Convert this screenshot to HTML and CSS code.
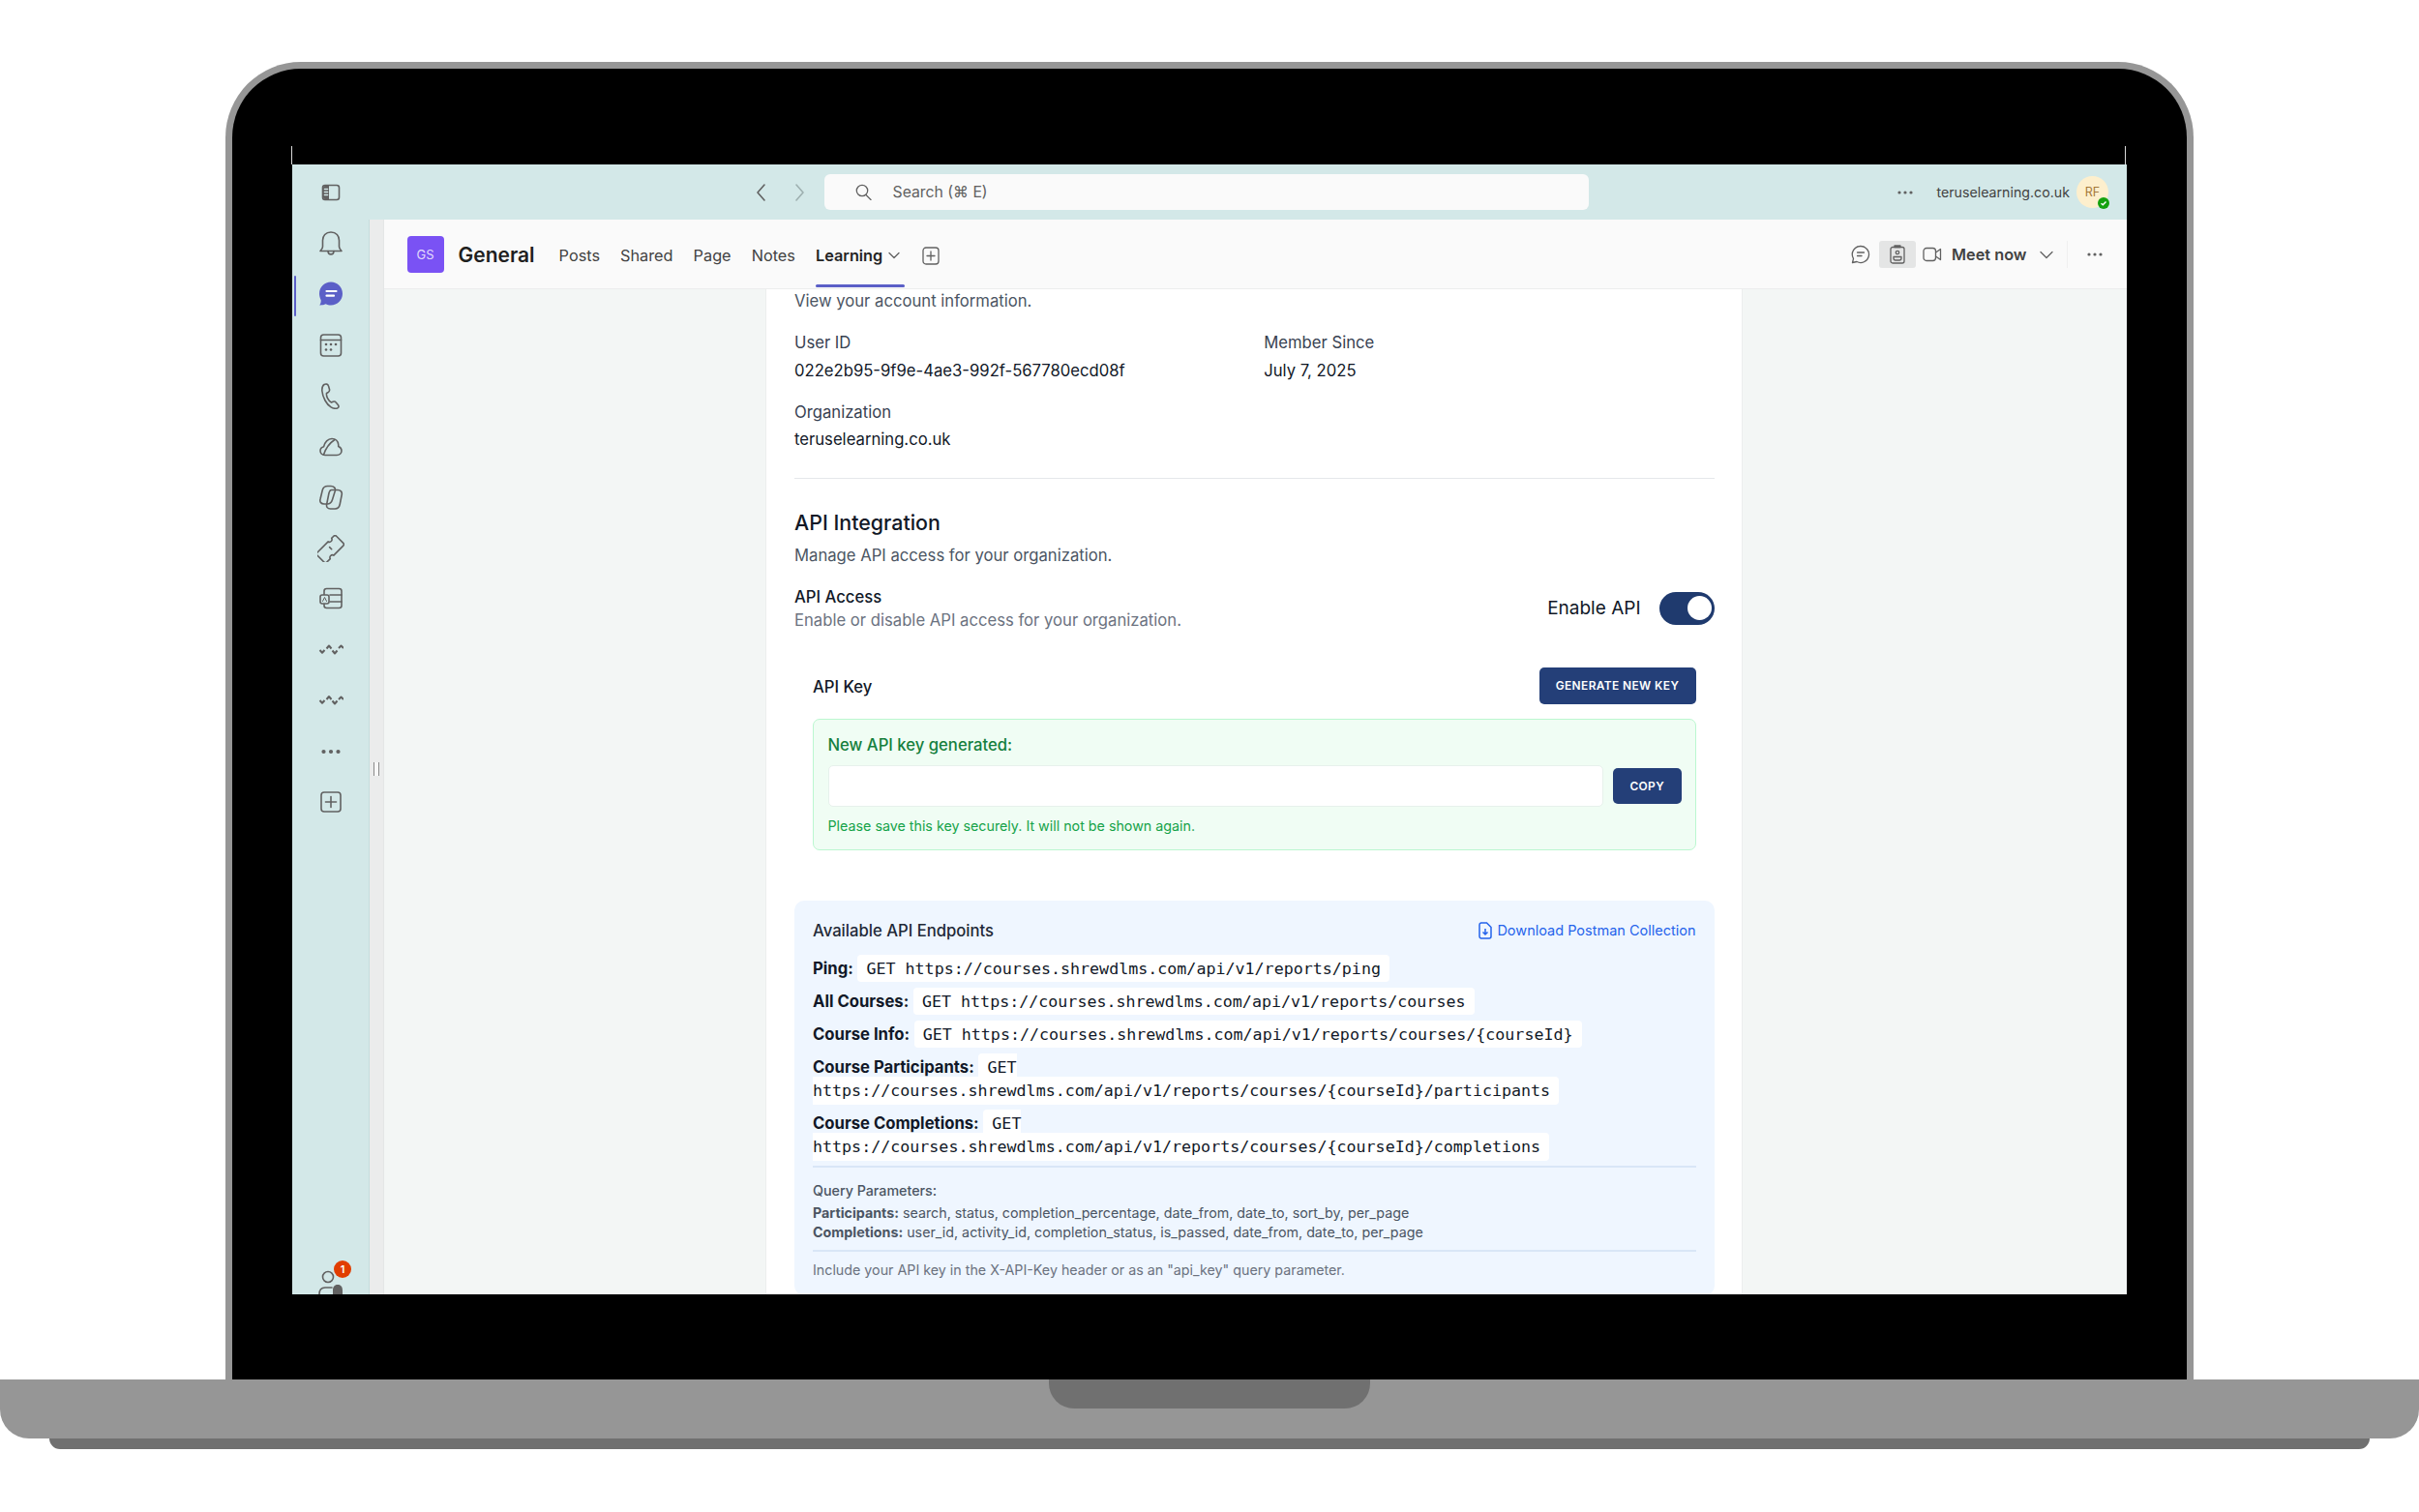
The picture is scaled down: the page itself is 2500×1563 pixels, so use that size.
FILE: index.html
```html
<!DOCTYPE html>
<html lang="en">
<head>
<meta charset="utf-8">
<title>General | Learning</title>
<link rel="stylesheet" href="styles.css">
</head>
<body>
<div class="device">
  <div class="lid">
    <div class="screen-top"></div>
    <div class="app">
      <div class="topbar">
        <div class="top-toggle">
          <svg class="ic" width="20" height="20" viewBox="0 0 20 20"><rect x="1.500" y="2.500" width="17" height="15" rx="2.500"/><path class="solid" d="M4 3h4v14H4a2 2 0 0 1-2-2V5a2 2 0 0 1 2-2z"/><path d="M3.500 6.500h3M3.500 9.500h3M3.500 12.500h3" stroke="#d3e8e8"/></svg>
        </div>
        <div class="top-nav">
          <svg class="ic" width="20" height="24" viewBox="0 0 20 24"><path d="M14 4l-7 8 7 8"/></svg>
          <svg class="ic faded" width="20" height="24" viewBox="0 0 20 24"><path d="M6 4l7 8-7 8"/></svg>
        </div>
        <div class="search">
          <svg class="ic thin" width="17" height="17" viewBox="0 0 17 17"><circle cx="7" cy="7" r="5.700"/><path d="M11 11.500l5 5"/></svg>
          <span>Search (⌘ E)</span>
        </div>
        <div class="top-right">
          <svg class="dots" width="16" height="4" viewBox="0 0 16 4"><circle cx="2" cy="2" r="1.600"/><circle cx="8" cy="2" r="1.600"/><circle cx="14" cy="2" r="1.600"/></svg>
          <span class="tenant">teruselearning.co.uk</span>
          <div class="avatar">RF<span class="status"><svg width="8" height="8" viewBox="0 0 8 8"><path d="M1.500 4.200l1.800 1.600 3.200-3.400" fill="none" stroke="#fff" stroke-width="1.400"/></svg></span></div>
        </div>
      </div>
      <div class="workspace">
        <nav class="rail">
          <a class="rail-item"><svg class="ic" width="26" height="28" viewBox="0 0 26 28"><path d="M13 2c-5.500 0-8.500 4-8.500 8.500v6.500c0 1.500-1 3-2.500 4.500h22c-1.500-1.500-2.500-3-2.500-4.500v-6.500C21.500 6 18.500 2 13 2z"/><path d="M10 21.500c0 4.500 6 4.500 6 0"/></svg></a>
          <a class="rail-item is-active"><svg width="26" height="28" viewBox="0 0 26 28"><path fill="#5b5fc7" d="M13 1.500c6.600 0 12 5.400 12 12s-5.400 12-12 12c-2 0-3.800-.500-5.400-1.300-1.700.8-3.700 1.300-6.300 1.200 1.100-1.500 1.500-3.300 1.400-5.200C1.800 18.400 1 16 1 13.500c0-6.600 5.400-12 12-12z"/><path d="M8.500 11h10M8.500 15.700h7.500" stroke="#fff" stroke-width="2.200" stroke-linecap="round" fill="none"/></svg></a>
          <a class="rail-item"><svg class="ic" width="26" height="26" viewBox="0 0 26 26"><rect x="2.500" y="2" width="21" height="22" rx="3"/><path d="M2.500 7.500h21"/><g class="solid"><circle cx="8" cy="12" r="1.300"/><circle cx="13" cy="12" r="1.300"/><circle cx="18" cy="12" r="1.300"/><circle cx="8" cy="17.500" r="1.300"/><circle cx="13" cy="17.500" r="1.300"/></g></svg></a>
          <a class="rail-item"><svg class="ic" width="26" height="28" viewBox="0 0 26 28"><path d="M6 2.500c2-1 4-.5 4.500 1.500l1 3.500c.3 1.200-.2 2.300-1.300 3l-1.700 1c-.5 3 1.500 7.500 5 9.500l1.700-.7c1.200-.5 2.300-.2 3 .7l2.300 2.700c1 1.500.5 2.800-1 3.300-4 1.200-9-1.500-12.500-8C3.500 12.500 2.500 5 6 2.500z"/></svg></a>
          <a class="rail-item"><svg class="ic" width="26" height="20" viewBox="0 0 26 20"><path d="M7 18.500c-3 0-5-1.900-5-4.500 0-2.200 1.500-3.800 3.600-4.300C6.500 5 10 1.500 14 1.500c3.600 0 6.300 2.500 6.700 6 .1.700.1 1.400 0 2 2 .7 3.300 2.400 3.300 4.500 0 2.700-2.200 4.500-5 4.500z"/><path d="M5.500 18c2-6 6-12 11.500-15.500"/></svg></a>
          <a class="rail-item"><svg class="ic" width="26" height="26" viewBox="0 0 26 26"><path d="M9.500 1.500h3.500c3 0 5 2 4.300 5l-2.800 9c-.8 2.800-2.800 4.500-5.500 4.500H6c-3 0-4.800-2-4-5l2.300-9.500C5 3 7 1.500 9.500 1.500z"/><path d="M13.500 5.500h6.500c3 0 4.800 2 4.200 5l-2 10c-.6 2.800-2.500 4.500-5 4.500h-4.700c-3 0-4.500-2-3.800-5l2-10c.5-2.800 1.200-4.500 2.800-4.500z"/></svg></a>
          <a class="rail-item"><svg class="ic" width="28" height="28" viewBox="-14 -14 28 28"><g transform="rotate(-45)"><path d="M-13-7H3a2.600 2.600 0 0 0 5 0H11a2 2 0 0 1 2 2V5a2 2 0 0 1-2 2H-3a2.600 2.600 0 0 0-5 0H-13a2 2 0 0 1-2-2V-5a2 2 0 0 1 2-2z"/><path d="M0-2v3"/></g></svg></a>
          <a class="rail-item"><svg class="ic" width="26" height="26" viewBox="0 0 26 26"><rect x="6" y="2.500" width="18" height="20" rx="2.500"/><path d="M12 9h12M12 16h12"/><rect class="solid-light" x="2" y="9" width="9" height="9" rx="2"/><path d="M4.500 15.500l2-4 2 4" stroke-width="1"/></svg></a>
          <a class="rail-item"><svg class="ic wave" width="26" height="14" viewBox="0 0 26 14"><path d="M1.500 7l2.500 2.700L6.500 7M8.500 5.500l2.500-3 2.500 3M14.500 7.500L17 10.500l2.500-3M21 5l2.500-2.500L26 5"/></svg></a>
          <a class="rail-item"><svg class="ic wave" width="26" height="14" viewBox="0 0 26 14"><path d="M1.500 7l2.500 2.700L6.500 7M8.500 6l2.500-3 2.500 3M14.500 7.500L17 10.500l2.500-3M21 6l2.500-2.500L26 6"/></svg></a>
          <a class="rail-item"><svg class="dots" width="20" height="6" viewBox="0 0 20 6"><circle cx="2.500" cy="3" r="2.100"/><circle cx="10" cy="3" r="2.100"/><circle cx="17.500" cy="3" r="2.100"/></svg></a>
          <a class="rail-item"><svg class="ic" width="24" height="24" viewBox="0 0 24 24"><rect x="2" y="2" width="20" height="20" rx="3"/><path d="M12 6.500v11M6.500 12h11"/></svg></a>
          <a class="rail-item rail-person"><svg class="ic" width="28" height="32" viewBox="0 0 28 32"><circle cx="11" cy="9" r="5.500"/><path d="M2 27c0-5 2-7 6-7h7"/><path class="solid" stroke="none" d="M21 17c3.500 0 5 2.500 5 6v4h3v2H13v-2h3v-4c0-3.500 1.500-6 5-6z"/></svg><span class="rail-badge">1</span></a>
        </nav>
        <div class="splitter"><span class="grip"></span></div>
        <div class="pane">
          <header class="channel">
            <div class="tile">GS</div>
            <h1 class="channel-name">General</h1>
            <div class="tabs">
              <a class="tab">Posts</a>
              <a class="tab">Shared</a>
              <a class="tab">Page</a>
              <a class="tab">Notes</a>
              <a class="tab is-current">Learning<svg class="ic thin" width="12" height="8" viewBox="0 0 12 8"><path d="M1 1.500L6 6.500l5-5"/></svg></a>
              <svg class="ic thin tab-add" width="18" height="19" viewBox="0 0 18 19"><rect x="1" y="1" width="16" height="17" rx="3"/><path d="M9 5v9M5 9.500h8"/></svg>
            </div>
            <div class="channel-tools">
              <svg class="ic thin" width="20" height="20" viewBox="0 0 20 20"><path d="M10 1.500a8.500 8.500 0 1 1-4 16L1.500 18.500l1-4.200A8.500 8.500 0 0 1 10 1.500z"/><path d="M6.500 8h7M6.500 11.500h4.500"/></svg>
              <span class="tool-on"><svg class="ic thin" width="16" height="20" viewBox="0 0 16 20"><rect x="1" y="2.500" width="14" height="16.500" rx="2"/><path d="M5 2.500V1h6v1.500z"/><circle cx="8" cy="8" r="1.700"/><path d="M4 12.500h8v1.500a2 2 0 0 1-2 2H6a2 2 0 0 1-2-2z"/></svg></span>
              <svg class="ic thin tool-video" width="20" height="16" viewBox="0 0 20 16"><rect x="1" y="1.500" width="12.500" height="13" rx="3"/><path d="M13.500 6l5-3.500v11l-5-3.500"/></svg>
              <span class="meet">Meet now</span>
              <svg class="ic thin tool-chev" width="14" height="9" viewBox="0 0 14 9"><path d="M1 1.500l6 6 6-6"/></svg>
              <span class="tool-sep"></span>
              <svg class="dots" width="16" height="4" viewBox="0 0 16 4"><circle cx="2" cy="2" r="1.600"/><circle cx="8" cy="2" r="1.600"/><circle cx="14" cy="2" r="1.600"/></svg>
            </div>
          </header>
          <main class="stage">
            <section class="panel">
              <p class="muted">View your account information.</p>
              <div class="info-grid">
                <div class="info-item"><div class="info-label">User ID</div><div class="info-value">022e2b95-9f9e-4ae3-992f-567780ecd08f</div></div>
                <div class="info-item"><div class="info-label">Member Since</div><div class="info-value">July 7, 2025</div></div>
                <div class="info-item"><div class="info-label">Organization</div><div class="info-value">teruselearning.co.uk</div></div>
              </div>
              <hr class="rule">
              <h2 class="section-title">API Integration</h2>
              <p class="muted section-sub">Manage API access for your organization.</p>
              <div class="access-row">
                <div>
                  <div class="access-title">API Access</div>
                  <div class="muted">Enable or disable API access for your organization.</div>
                </div>
                <div class="switch-wrap">
                  <span class="switch-label">Enable API</span>
                  <span class="switch"><span class="thumb"></span></span>
                </div>
              </div>
              <div class="key-section">
                <div class="key-head">
                  <span class="key-title">API Key</span>
                  <button class="btn btn-generate">Generate new key</button>
                </div>
                <div class="key-box">
                  <div class="key-box-title">New API key generated:</div>
                  <div class="key-input-row">
                    <div class="key-input"></div>
                    <button class="btn btn-copy">Copy</button>
                  </div>
                  <div class="key-note">Please save this key securely. It will not be shown again.</div>
                </div>
              </div>
              <div class="endpoints">
                <div class="ep-head">
                  <span class="ep-title">Available API Endpoints</span>
                  <a class="ep-link"><svg width="14" height="18" viewBox="0 0 14 18" fill="none" stroke="#2563eb" stroke-width="1.500"><path d="M2.500 1h6l4.500 4.500V15a2 2 0 0 1-2 2h-8.500a2 2 0 0 1-1.500-2V3a2 2 0 0 1 1.500-2z"/><path d="M7 7v6M4.500 10.500L7 13l2.500-2.500"/></svg>Download Postman Collection</a>
                </div>
                <div class="ep-row"><strong>Ping:</strong> <code>GET https://courses.shrewdlms.com/api/v1/reports/ping</code></div>
                <div class="ep-row"><strong>All Courses:</strong> <code>GET https://courses.shrewdlms.com/api/v1/reports/courses</code></div>
                <div class="ep-row"><strong>Course Info:</strong> <code>GET https://courses.shrewdlms.com/api/v1/reports/courses/{courseId}</code></div>
                <div class="ep-row"><strong>Course Participants:</strong> <code>GET https://courses.shrewdlms.com/api/v1/reports/courses/{courseId}/participants</code></div>
                <div class="ep-row"><strong>Course Completions:</strong> <code>GET https://courses.shrewdlms.com/api/v1/reports/courses/{courseId}/completions</code></div>
                <div class="ep-params">
                  <div class="param-title">Query Parameters:</div>
                  <div class="param-line"><strong>Participants:</strong> search, status, completion_percentage, date_from, date_to, sort_by, per_page</div>
                  <div class="param-line"><strong>Completions:</strong> user_id, activity_id, completion_status, is_passed, date_from, date_to, per_page</div>
                </div>
                <div class="ep-foot">Include your API key in the X-API-Key header or as an "api_key" query parameter.</div>
              </div>
            </section>
          </main>
        </div>
      </div>
    </div>
  </div>
  <div class="base"><div class="notch"></div></div>
  <div class="tray"></div>
</div>
</body>
</html>
```

FILE: styles.css
```css
* { box-sizing: border-box; }
html, body { margin: 0; padding: 0; background: #fff; }
body { width: 2500px; height: 1563px; overflow: hidden; font-family: Inter, "Noto Sans", sans-serif; color: #111827; }
p, h1, h2 { margin: 0; font-weight: inherit; }

.device { padding-top: 64px; }
.lid { width: 2034px; height: 1362px; margin-left: 233px; padding: 0 64px 0 61.500px; background: #000; border: solid #969696; border-width: 7px 7px 0; border-radius: 78px 78px 0 0; }
.screen-top { height: 99px; margin: 0 -1px; border: solid #d8d8d8; border-width: 0 1px; clip-path: inset(80px 0 0 0); }
.app { width: 1896px; height: 1168px; display: flex; flex-direction: column; overflow: hidden; }
.base { height: 61px; background: #969696; border-radius: 0 0 30px 30px; display: flex; justify-content: center; }
.notch { width: 332px; height: 30px; background: #707070; border-radius: 0 0 26px 26px; }
.tray { height: 11px; margin: 0 51px; background: #707070; border-radius: 0 0 12px 12px; }

.ic { fill: none; stroke: #616161; stroke-width: 1.600; stroke-linecap: round; stroke-linejoin: round; flex: none; display: block; }
.ic.thin { stroke-width: 1.300; }
.ic.wave { stroke-width: 2; stroke-linecap: butt; }
.ic .solid, .solid { fill: #616161; stroke: none; }
.ic .solid-light { fill: #d3e8e8; }
.ic.faded { stroke: #9eb0b0; }
.dots { fill: #616161; flex: none; display: block; }

.topbar { height: 57px; flex: none; display: flex; align-items: center; background: #d3e8e8; }
.top-toggle { width: 80px; padding-left: 1px; display: flex; justify-content: center; }
.top-nav { display: flex; gap: 21px; margin-left: 394px; }
.search { width: 790px; height: 37px; margin-left: 15px; padding-left: 32px; display: flex; align-items: center; gap: 22px; background: #fafafa; border-radius: 6px; color: #616161; font-size: 15.800px; }
.top-right { display: flex; align-items: center; margin-left: auto; padding-right: 18.500px; }
.tenant { margin-left: 24px; font-size: 14.200px; color: #424242; }
.avatar { position: relative; width: 33px; height: 33px; margin-left: 7px; border-radius: 50%; background: #fdefcd; color: #a5793a; font-size: 12.500px; display: flex; align-items: center; justify-content: center; }
.status { position: absolute; right: -0.500px; bottom: -0.500px; width: 12px; height: 12px; border-radius: 50%; background: #13a10e; display: flex; align-items: center; justify-content: center; }

.workspace { flex: 1; min-height: 0; display: flex; }
.rail { width: 80px; flex: none; display: flex; flex-direction: column; align-items: center; padding: 8.700px 0 0 2px; gap: 20.500px; background: #d3e8e8; border-right: 1px solid #c5dcdc; }
.rail-item { position: relative; width: 32px; height: 32px; flex: none; display: flex; align-items: center; justify-content: center; }
.rail-item.is-active::before { content: ""; position: absolute; left: -22.500px; top: -3px; width: 2.500px; height: 42px; background: #5b5fc7; border-radius: 2px; }
.rail-person { margin-top: auto; margin-bottom: -4.500px; }
.rail-badge { position: absolute; top: -8px; left: 19px; width: 18px; height: 18px; border-radius: 50%; background: #e13d00; color: #fff; font-size: 11px; font-weight: 600; display: flex; align-items: center; justify-content: center; }
.splitter { width: 15px; flex: none; display: flex; align-items: center; justify-content: center; background: #ebecec; border-right: 1px solid #e4e6e6; padding-top: 24px; }
.grip { width: 6px; height: 14px; border: solid #8a8a8a; border-width: 0 1.500px; background: #f7f7f7; }

.pane { flex: 1; min-width: 0; display: flex; flex-direction: column; background: #f3f6f5; }
.channel { height: 72px; flex: none; display: flex; align-items: center; padding-left: 24px; background: #fafafa; border-bottom: 1px solid #eceded; }
.tile { width: 38px; height: 38px; border-radius: 4px; background: #7a52f4; color: #e2d9fc; font-size: 13px; display: flex; align-items: center; justify-content: center; }
.channel-name { margin: 2px 0 0 15px; font-size: 21px; font-weight: 600; color: #1f1f1f; }
.tabs { display: flex; align-items: center; gap: 21px; height: 100%; margin-left: 25px; }
.tab { position: relative; display: flex; align-items: center; gap: 5.500px; height: 100%; padding-top: 3px; font-size: 16.300px; color: #424242; }
.tab.is-current { font-weight: 600; color: #242424; padding-right: 5px; }
.tab.is-current::after { content: ""; position: absolute; left: 0; right: 0; bottom: 1.500px; height: 3px; border-radius: 2px; background: #5b5fc7; }
.tab-add { margin: 3px 0 0 -3px; }
.channel-tools { display: flex; align-items: center; margin-left: auto; padding: 1px 25px 0 0; height: 100%; }
.tool-on { width: 38px; height: 28px; margin-left: 9px; border-radius: 3px; background: #e4e5e5; display: flex; align-items: center; justify-content: center; }
.tool-video { margin-left: 7px; }
.meet { margin-left: 10px; font-size: 16.300px; font-weight: 600; color: #424242; }
.tool-chev { margin-left: 13px; }
.tool-sep { width: 1px; height: 28px; margin: 0 20px 0 14px; background: #f0f0f0; }

.stage { flex: 1; min-height: 0; overflow: hidden; padding-left: 394.500px; }
.panel { width: 1010px; padding: 0.800px 28.500px 0 29px; background: #fff; border: solid #eceeee; border-width: 0 1px; min-height: 100%; }
.muted { font-size: 16.660px; line-height: 23.800px; color: #4b5563; }
.info-grid { display: grid; grid-template-columns: 1fr 1fr; column-gap: 20px; row-gap: 19.300px; margin-top: 19.800px; }
.info-label { font-size: 16.660px; line-height: 23.800px; color: #374151; }
.info-value { margin-top: 4.700px; font-size: 16.660px; line-height: 23.800px; color: #111827; }
.rule { height: 1px; margin: 26.500px 0 0; border: 0; background: #e5e7eb; }
.section-title { margin-top: 31px; font-size: 21.420px; line-height: 28.500px; font-weight: 500; color: #111827; }
.section-sub { margin-top: 8.300px; }
.access-row { display: flex; align-items: center; justify-content: space-between; margin-top: 20px; }
.access-title { font-size: 16.660px; line-height: 23.800px; font-weight: 500; color: #111827; }
.access-row .muted { color: #6b7280; }
.switch-wrap { display: flex; align-items: center; gap: 19px; margin-top: -3px; }
.switch-label { font-size: 19px; color: #111827; }
.switch { width: 57px; height: 34px; padding: 4.500px 3px; border-radius: 17px; background: #1f3a6e; display: flex; justify-content: flex-end; }
.thumb { width: 25px; height: 25px; border-radius: 50%; background: #fff; }

.key-section { margin-top: 36px; padding: 0 19px; }
.key-head { display: flex; align-items: center; justify-content: space-between; }
.key-title { margin-top: 3px; font-size: 16.660px; font-weight: 500; color: #111827; }
.btn { border: 0; border-radius: 5px; background: #243f78; color: #fff; font-family: inherit; font-size: 11.900px; font-weight: 600; letter-spacing: .4px; text-transform: uppercase; display: block; }
.btn-generate { width: 162px; height: 38px; }
.btn-copy { width: 70.500px; height: 37.700px; flex: none; }
.key-box { margin-top: 14.700px; height: 136px; padding: 15.800px 14px 0 14.500px; background: #f0fdf4; border: 1px solid #bbf7d0; border-radius: 7px; }
.key-box-title { font-size: 16.660px; line-height: 23.800px; font-weight: 500; color: #15803d; }
.key-input-row { display: flex; align-items: center; gap: 10px; margin-top: 8.200px; }
.key-input { flex: 1; height: 42.300px; background: #fff; border: 1px solid #e7f1ec; border-radius: 5px; }
.key-note { margin-top: 10px; font-size: 14.280px; line-height: 20px; color: #16a34a; }

.endpoints { margin-top: 52.300px; padding: 19.700px 19px 15.500px; background: #eff6ff; border-radius: 10px; }
.ep-head { display: flex; align-items: center; justify-content: space-between; margin-bottom: 14.200px; }
.ep-title { font-size: 16.660px; line-height: 23.800px; font-weight: 500; color: #1f2937; }
.ep-link { display: flex; align-items: center; gap: 5px; margin-bottom: 2px; font-size: 14.500px; color: #2563eb; }
.ep-row { font-size: 16.660px; line-height: 24.300px; margin-bottom: 9.700px; color: #111827; }
.ep-row strong { font-weight: 700; }
.ep-row code { padding: 4.800px 9px; background: #fff; border-radius: 4px; font-family: "DejaVu Sans Mono", monospace; font-size: 16.660px; line-height: 1; color: #111827; }
.ep-params { margin-top: -2px; padding: 13.500px 0 8px; border-top: 2px solid #d9e6f7; border-bottom: 2px solid #d9e6f7; }
.param-title { font-size: 14.280px; line-height: 20px; margin-bottom: 3.300px; font-weight: 500; color: #4b5563; }
.param-line { font-size: 14.280px; line-height: 20px; color: #4b5563; }
.param-line strong { font-weight: 700; }
.ep-foot { margin-top: 9.500px; font-size: 14.280px; line-height: 20px; color: #6b7280; }
```
